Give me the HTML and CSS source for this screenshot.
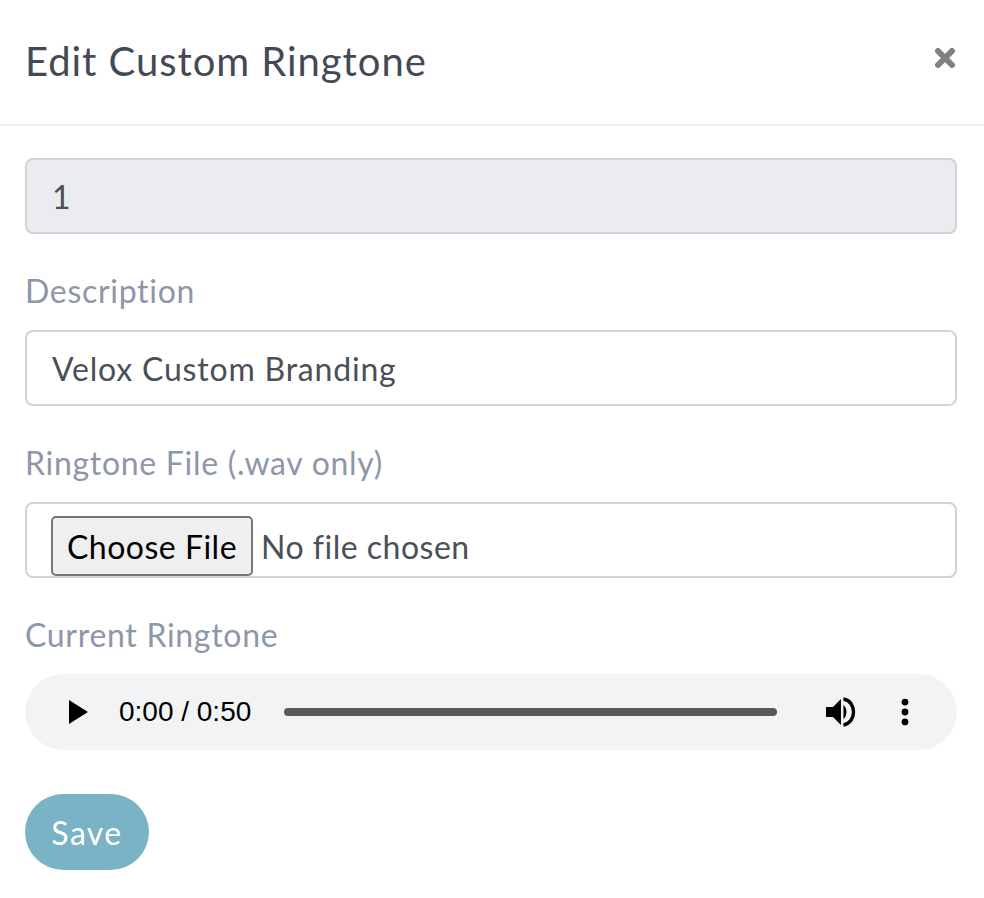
FILE: index.html
```html
<!DOCTYPE html>
<html>
<head>
    <title>Edit Custom Ringtone</title>
    <link rel="stylesheet" href="styles.css">
</head>
<body>
    <div class="modal">
        <div class="modal-header">
            <h2>Edit Custom Ringtone</h2>
            <svg class="close" viewBox="0 0 22 22" width="22" height="22">
                <path d="M4 4 L18 18 M18 4 L4 18" stroke="#808080" stroke-width="6" stroke-linecap="round"/>
            </svg>
        </div>
        <div class="modal-body">
            <input type="text" class="field field-disabled" value="1" disabled>

            <label class="label">Description</label>
            <input type="text" class="field" value="Velox Custom Branding">

            <label class="label">Ringtone File (.wav only)</label>
            <div class="field file-field">
                <span class="file-button">Choose File</span>
                <span class="file-name">No file chosen</span>
            </div>

            <label class="label">Current Ringtone</label>
            <div class="player">
                <svg class="play" viewBox="0 0 20 24" width="20" height="24">
                    <path d="M0 0 L19 12 L0 24 Z" fill="#000"/>
                </svg>
                <span class="time">0:00 / 0:50</span>
                <div class="track"></div>
                <svg class="volume" viewBox="0 0 32 32" width="32" height="32">
                    <path d="M1 11 H8 L16 3 V29 L8 21 H1 Z" fill="#000"/>
                    <path d="M18.5 9 C22.5 11.5 22.5 20.5 18.5 23 Z" fill="#000"/>
                    <path d="M18.5 3 C32 5 32 27 18.5 29" fill="none" stroke="#000" stroke-width="3.4"/>
                </svg>
                <svg class="menu" viewBox="0 0 8 28" width="8" height="28">
                    <circle cx="4" cy="4" r="3.4" fill="#000"/>
                    <circle cx="4" cy="14" r="3.4" fill="#000"/>
                    <circle cx="4" cy="24" r="3.4" fill="#000"/>
                </svg>
            </div>

            <button class="save">Save</button>
        </div>
    </div>
</body>
</html>
```
FILE: styles.css
```css
* {
    box-sizing: border-box;
}

body {
    margin: 0;
    background-color: #fff;
    font-family: "Lato", sans-serif;
    color: #495057;
}

.modal {
    width: 984px;
    height: 898px;
}

.modal-header {
    height: 126px;
    padding: 0 28px 0 25px;
    border-bottom: 2px solid #eceef1;
    display: flex;
    justify-content: space-between;
    align-items: flex-start;
}

.modal-header h2 {
    margin: 35px 0 0;
    font-size: 40px;
    line-height: 52px;
    font-weight: 400;
    letter-spacing: 0.95px;
    color: #434a54;
}

.close {
    margin-top: 47px;
}

.modal-body {
    padding: 32px 27px 0 25px;
    display: flex;
    flex-direction: column;
}

.label {
    display: block;
    height: 40px;
    margin: 37px 0 19px;
    font-size: 32px;
    line-height: 40px;
    letter-spacing: 0.7px;
    color: #8d97a8;
}

.field {
    width: 932px;
    height: 76px;
    padding: 0 25px;
    border: 2px solid #ced4da;
    border-radius: 8px;
    background-color: #fff;
    font-family: "Lato", sans-serif;
    font-size: 32px;
    letter-spacing: 0.8px;
    color: #495057;
}

.field-disabled {
    background-color: #ebecf0;
}

.file-field {
    display: flex;
    align-items: center;
    gap: 8px;
    padding: 12px 25px 0 24px;
    letter-spacing: 0.5px;
}

.file-button {
    width: 202px;
    height: 60px;
    border: 2px solid #767676;
    border-radius: 5px;
    background-color: #efefef;
    color: #000;
    display: flex;
    align-items: center;
    justify-content: center;
    flex-shrink: 0;
}

.player {
    width: 932px;
    height: 76px;
    padding: 0 48px 0 44px;
    border-radius: 38px;
    background-color: #f1f3f4;
    display: flex;
    align-items: center;
}

.time {
    margin-left: 30px;
    font-family: "Liberation Sans", sans-serif;
    font-size: 28px;
    color: #000;
    white-space: nowrap;
}

.track {
    width: 494px;
    height: 8px;
    margin-left: 33px;
    border-radius: 4px;
    background-color: #595959;
}

.volume {
    margin-left: 48px;
}

.menu {
    margin-left: 44px;
}

.save {
    width: 124px;
    height: 76px;
    margin-top: 44px;
    border: none;
    border-radius: 38px;
    background-color: #7ab2c6;
    color: #fff;
    font-family: "Lato", sans-serif;
    font-size: 32px;
    letter-spacing: 1.4px;
}
```
